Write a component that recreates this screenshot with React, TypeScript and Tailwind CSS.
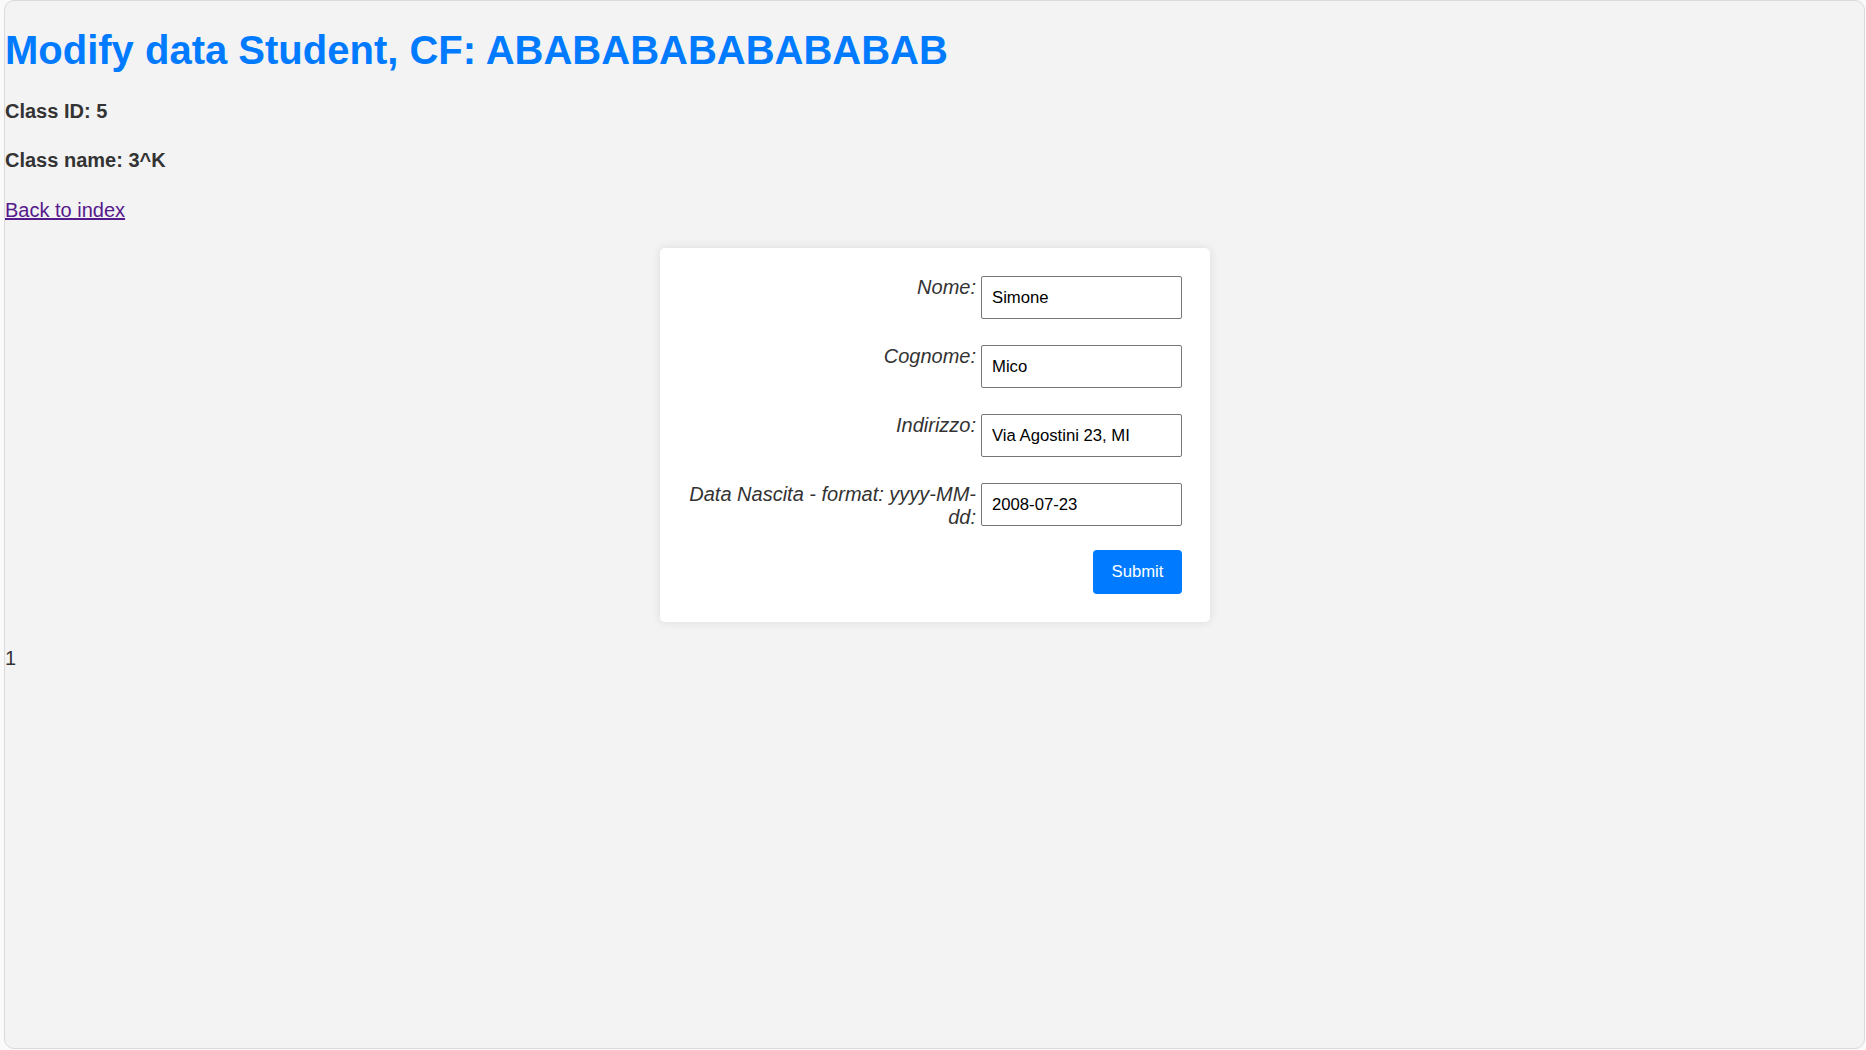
import { useState } from "react";

const fields = [
  { name: "nome", label: "Nome:", value: "Simone" },
  { name: "cognome", label: "Cognome:", value: "Mico" },
  { name: "indirizzo", label: "Indirizzo:", value: "Via Agostini 23, MI" },
  {
    name: "dataNascita",
    label: "Data Nascita - format: yyyy-MM-dd:",
    value: "2008-07-23",
  },
];

export default function App() {
  const [values, setValues] = useState<Record<string, string>>(
    Object.fromEntries(fields.map((f) => [f.name, f.value]))
  );

  return (
    <div className="h-[1050px] bg-[#fafafa] pl-[4px] pr-[1px] pb-[1px] font-['Liberation_Sans',Arial,sans-serif] text-[#333]">
      <div className="h-full overflow-hidden rounded-[10px] border border-[#dadada] bg-[#f3f3f3]">
        <h1 className="mt-[26px] mb-[27px] text-[40px] leading-[46px] font-bold text-[#007bff]">
          Modify data Student, CF: ABABABABABABABAB
        </h1>
        <h4 className="mb-[26px] text-[20px] leading-[23px] font-bold">
          Class ID: 5
        </h4>
        <h4 className="mb-[27px] text-[20px] leading-[23px] font-bold">
          Class name: 3^K
        </h4>
        <p className="text-[20px] leading-[23px]">
          <a href="#" className="text-[#551a8b] underline">
            Back to index
          </a>
        </p>

        <form
          onSubmit={(e) => e.preventDefault()}
          className="mt-[26px] ml-[655px] w-[550px] rounded-[5px] bg-white px-[28px] pt-[28px] pb-[28px] shadow-[0_0_10px_rgba(0,0,0,0.1)]"
        >
          <div className="flex flex-col gap-[26px]">
            {fields.map((f) => (
              <div key={f.name} className="flex items-start gap-[5px]">
                <label
                  htmlFor={f.name}
                  className="w-[288px] text-right text-[20px] leading-[23px] italic text-[#333]"
                >
                  {f.label}
                </label>
                <input
                  id={f.name}
                  type="text"
                  value={values[f.name]}
                  onChange={(e) =>
                    setValues({ ...values, [f.name]: e.target.value })
                  }
                  className="h-[43px] w-[201px] rounded-[2px] border border-[#767676] bg-white px-[10px] text-[16.7px] text-black outline-none"
                />
              </div>
            ))}
          </div>
          <div className="mt-[21px] flex justify-end">
            <button
              type="submit"
              className="h-[44px] w-[89px] rounded-[4px] bg-[#007bff] text-[16.7px] text-white"
            >
              Submit
            </button>
          </div>
        </form>

        <p className="mt-[25px] text-[20px] leading-[23px]">1</p>
      </div>
    </div>
  );
}
